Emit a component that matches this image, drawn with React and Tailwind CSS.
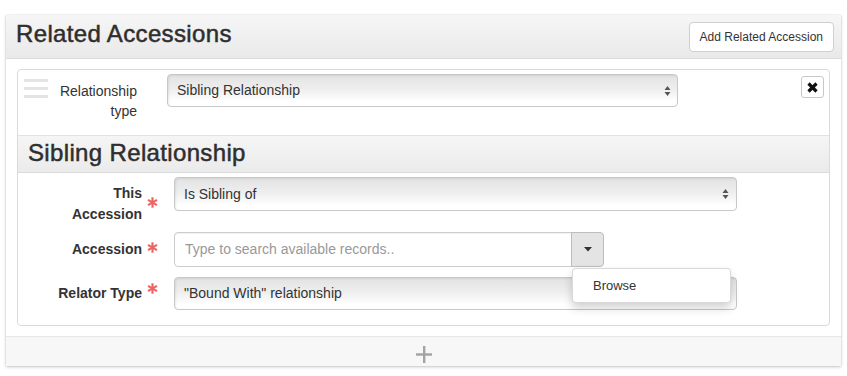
import React from "react";

function Arrows() {
  return (
    <svg width="7" height="12" viewBox="0 0 7 12" className="block">
      <path d="M3.5 1 L6.5 5 L0.5 5 Z" fill="#555" />
      <path d="M3.5 11 L6.5 7 L0.5 7 Z" fill="#555" />
    </svg>
  );
}

function Star() {
  return (
    <svg width="11" height="11" viewBox="0 0 11 11" className="block">
      <g stroke="#ec6464" strokeWidth="2.2">
        <line x1="5.5" y1="0.3" x2="5.5" y2="10.7" />
        <line x1="1" y1="2.9" x2="10" y2="8.1" />
        <line x1="1" y1="8.1" x2="10" y2="2.9" />
      </g>
    </svg>
  );
}

function Select({ text, w, arrowRight, h }) {
  return (
    <div
      className={`${w} ${h} flex items-center justify-between rounded-[4px] border border-[#c8c8c8] bg-[linear-gradient(to_bottom,#e3e3e3,#eeeeee_45%,#ffffff_85%)] shadow-[inset_1px_1px_2px_rgba(0,0,0,0.08)] pl-[9px] text-[14px] text-[#333]`}
    >
      <span>{text}</span>
      <span className={arrowRight}>
        <Arrows />
      </span>
    </div>
  );
}

export default function App() {
  return (
    <div className="w-[847px] h-[376px] bg-white pt-[15px] pl-[6px] font-['Liberation_Sans',Arial,sans-serif] text-[#333]">
      <div className="w-[835px] h-[351px] flex flex-col bg-white shadow-[0_1px_3px_rgba(0,0,0,0.22),0_0_1px_rgba(0,0,0,0.15)]">
        {/* header */}
        <div className="h-[44px] flex items-center justify-between pl-[10px] pr-[7px] border-b border-[#dcdcdc] bg-[linear-gradient(to_bottom,#f6f6f6,#e9e9e9)]">
          <div className="text-[24px] leading-[24px] tracking-[0.35px] mb-[6px] text-[#2e2e2e] [-webkit-text-stroke:0.5px_#2e2e2e]">
            Related Accessions
          </div>
          <div className="h-[30px] px-[10px] flex items-center rounded-[4px] border border-[#cfcfcf] bg-white text-[12px] text-[#333]">
            Add Related Accession
          </div>
        </div>

        {/* body */}
        <div className="h-[277px] px-[11px] pt-[10px]">
          <div className="h-[257px] rounded-[4px] border border-[#dadada] flex flex-col overflow-visible">
            {/* row 1 */}
            <div className="h-[65px] flex items-start">
              <div className="ml-[6px] mt-[9px] w-[24px] flex flex-col gap-[5px]">
                <div className="h-[3px] bg-[#e4e4e4]" />
                <div className="h-[3px] bg-[#e4e4e4]" />
                <div className="h-[3px] bg-[#e4e4e4]" />
              </div>
              <div className="w-[89px] mt-[11px] text-right text-[14px] leading-[20px]">
                Relationship
                <br />
                type
              </div>
              <div className="ml-[30px] mt-[4px]">
                <Select text="Sibling Relationship" w="w-[511px]" h="h-[33px]" arrowRight="pr-[6px]" />
              </div>
              <div className="flex-1" />
              <div className="mt-[6px] mr-[5px] w-[23px] h-[22px] rounded-[3px] border border-[#c8c8c8] bg-white flex items-center justify-center">
                <svg width="11" height="11" viewBox="0 0 11 11">
                  <g stroke="#111" strokeWidth="3.2">
                    <line x1="1.5" y1="1.5" x2="9.5" y2="9.5" />
                    <line x1="9.5" y1="1.5" x2="1.5" y2="9.5" />
                  </g>
                </svg>
              </div>
            </div>

            {/* sibling section */}
            <div className="border-t border-[#e2e2e2]">
              <div className="h-[37px] flex items-center pl-[10px] border-b border-[#dadada] bg-[linear-gradient(to_bottom,#f5f5f5,#ebebeb)]">
                <div className="text-[24px] leading-[24px] tracking-[0.35px] mb-[2px] text-[#2e2e2e] [-webkit-text-stroke:0.5px_#2e2e2e]">
                  Sibling Relationship
                </div>
              </div>

              <div className="pt-[4px] flex flex-col gap-[10px]">
                {/* row: This Accession */}
                <div className="h-[45px] flex items-start">
                  <div className="w-[124px] mt-[6px] text-right text-[14px] leading-[21px] font-bold">
                    This
                    <br />
                    Accession
                  </div>
                  <div className="w-[32px] pl-[5px] mt-[20px]">
                    <Star />
                  </div>
                  <Select text="Is Sibling of" w="w-[563px]" h="h-[34px]" arrowRight="pr-[7px]" />
                </div>

                {/* row: Accession */}
                <div className="h-[35px] flex items-start">
                  <div className="w-[124px] mt-[7px] text-right text-[14px] leading-[20px] font-bold">Accession</div>
                  <div className="w-[32px] pl-[5px] mt-[10px]">
                    <Star />
                  </div>
                  <div className="relative flex">
                    <div className="w-[398px] h-[35px] flex items-center rounded-l-[4px] border border-[#cccccc] bg-white shadow-[inset_0_1px_1px_rgba(0,0,0,0.06)] pl-[10px] text-[14px] text-[#999]">
                      Type to search available records..
                    </div>
                    <div className="w-[33px] h-[35px] -ml-px flex items-center justify-center rounded-r-[4px] border border-[#bdbdbd] bg-[#e4e4e4]">
                      <svg width="8" height="5" viewBox="0 0 8 5">
                        <path d="M0 0 L8 0 L4 4.5 Z" fill="#333" />
                      </svg>
                    </div>
                    <div className="absolute left-[398px] top-[36px] z-10 w-[159px] h-[35px] flex items-center pl-[20px] rounded-[4px] border border-[rgba(0,0,0,0.15)] bg-white shadow-[0_5px_10px_rgba(0,0,0,0.18)] text-[13px] text-[#333]">
                      Browse
                    </div>
                  </div>
                </div>

                {/* row: Relator Type */}
                <div className="h-[33px] flex items-start">
                  <div className="w-[124px] mt-[6px] text-right text-[14px] leading-[20px] font-bold">Relator Type</div>
                  <div className="w-[32px] pl-[5px] mt-[6px]">
                    <Star />
                  </div>
                  <Select text={'"Bound With" relationship'} w="w-[563px]" h="h-[33px]" arrowRight="pr-[7px]" />
                </div>
              </div>
            </div>
          </div>
        </div>

        {/* footer */}
        <div className="h-[30px] border-t border-[#e6e6e6] bg-[#f7f7f7] flex justify-center pt-[9px]">
          <svg width="16" height="17" viewBox="0 0 16 17" className="block">
            <rect x="7" y="0" width="2.4" height="17" fill="#a3a3a3" />
            <rect x="0" y="7.3" width="16" height="2.4" fill="#a3a3a3" />
          </svg>
        </div>
      </div>
    </div>
  );
}
